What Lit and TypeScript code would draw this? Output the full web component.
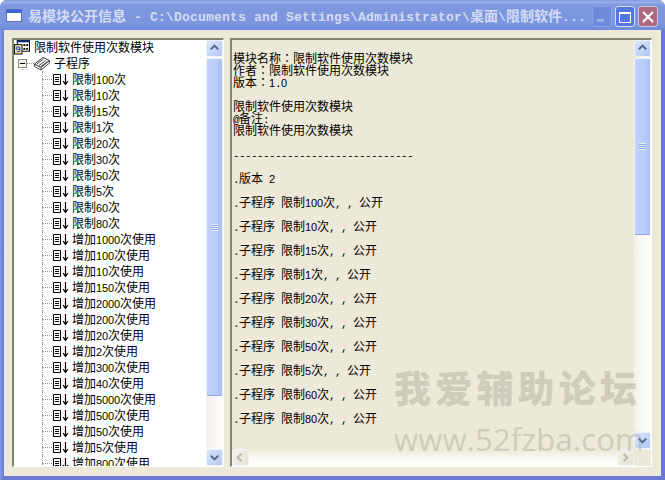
import { LitElement, html, css, svg } from "lit";
import { customElement } from "lit/decorators.js";

const treeItems = ["限制100次","限制10次","限制15次","限制1次","限制20次","限制30次","限制50次","限制5次","限制60次","限制80次","增加1000次使用","增加100次使用","增加10次使用","增加150次使用","增加2000次使用","增加200次使用","增加20次使用","增加2次使用","增加300次使用","增加40次使用","增加5000次使用","增加500次使用","增加50次使用","增加5次使用","增加800次使用"];
const progs = ["限制100次","限制10次","限制15次","限制1次","限制20次","限制30次","限制50次","限制5次","限制60次","限制80次"];

const up = svg`<path d="M4 9 L8 5 L12 9" fill="none" stroke="#4d6185" stroke-width="2"/>`;
const down = svg`<path d="M4 6 L8 10 L12 6" fill="none" stroke="#4d6185" stroke-width="2"/>`;
const left = svg`<path d="M9 4 L5 8 L9 12" fill="none" stroke="#b8b8a8" stroke-width="2"/>`;
const right = svg`<path d="M6 4 L10 8 L6 12" fill="none" stroke="#b8b8a8" stroke-width="2"/>`;

/* Half-width runs get their own font so that each character takes 6px, as in the bitmap font of the original. */
function mix(text: string) {
  return text.split(/([0-9]+|[\x00-\x2f\x3a-\x7f]+|：)/).filter(Boolean).map(run => {
    if (run === "：") return html`<span class="c">：</span>`;
    if (/^[0-9]/.test(run)) return html`<span class="d">${run}</span>`;
    return /^[\x00-\x7f]/.test(run) ? html`<span class="a">${run}</span>` : run;
  });
}

@customElement("app-root")
export class AppRoot extends LitElement {
  static styles = css`
    :host { display: block; width: 665px; height: 480px; overflow: hidden; font-family: "Noto Sans CJK SC", "Liberation Sans", sans-serif; }
    .win { position: relative; width: 665px; height: 480px; box-sizing: border-box; display: flex; flex-direction: column; background: linear-gradient(to right, #7f96e2 0, #6a78d4 4px, #6a78d4 100%); border-radius: 7px 7px 0 0; }
    .title { height: 30px; flex: none; box-sizing: border-box; display: flex; align-items: flex-start; padding: 6px 7px 0 6px; gap: 6px; border-radius: 7px 7px 0 0;
      background: linear-gradient(to bottom, #7f97dd 0, #9ab0ea 2px, #7f99e0 5px, #7b95df 24px, #7089d8 30px); }
    .appicon { flex: none; margin-top: 2px; }
    .ttext { flex: 1; min-width: 0; margin-top: -1px; font-family: "Noto Sans CJK SC", sans-serif; font-size: 14px; line-height: 20px; font-weight: 700; color: #d3dcf4; white-space: pre; overflow: hidden; }
    .ttext .a { font-family: "Liberation Mono", monospace; font-size: 13px; letter-spacing: 0.2px; line-height: 0; }
    .btns { display: flex; gap: 3px; flex: none; }
    .btn { width: 20px; height: 21px; box-sizing: border-box; border: 1px solid #b5c4ee; border-radius: 3px; display: flex; align-items: center; justify-content: center; }
    .min { background: #7189dc; border-color: #8a9fe4; }
    .max { background: #5577e0; border-color: #d5ddf5; }
    .close { background: #ab6a80; border-color: #c9c5e0; }
    .body { flex: 1; min-height: 0; display: flex; margin: 0 4px 4px 4px; background: #ece9d8; padding: 8px 9px 9px 8px; gap: 6px; }
    .panel { position: relative; box-sizing: border-box; height: 100%; border-top: 2px solid #85826f; border-left: 2px solid #85826f; border-right: 1px solid #fff; border-bottom: 1px solid #fff; overflow: hidden; display: flex; }
    .left { width: 212px; background: #fff; flex: none; }
    .right { flex: 1; min-width: 0; background: #ece9d8; }
    .tree { flex: 1; min-width: 0; overflow: hidden; font-size: 12px; color: #000; margin-top: -1px; position: relative; }
    .a { font-family: "Liberation Mono", monospace; font-size: 11px; letter-spacing: -0.6px; line-height: 0; }
    .d { font-family: "Liberation Sans", sans-serif; font-size: 11px; letter-spacing: -0.12px; line-height: 0; }
    .c { font-family: "Noto Sans CJK TC", sans-serif; }
    .row { height: 16px; display: flex; align-items: center; white-space: pre; position: relative; line-height: 16px; }
    .root { gap: 4px; }
    .sub { padding-left: 4px; }
    .subdots { width: 7px; flex: none; border-top: 1px dotted #9c9a8c; }
    .sub svg { margin-right: 4px; }
    .subdown { position: absolute; left: 8px; top: 8px; height: 7px; border-left: 1px dotted #9c9a8c; }
    .leaf { padding-left: 28px; gap: 3px; }
    .leaf .leafline { margin-right: -3px; }
    .leafline { width: 10px; flex: none; height: 16px; position: relative; }
    .leafline::before { content: ""; position: absolute; left: 0; top: 0; bottom: 0; border-left: 1px dotted #9c9a8c; }
    .leafline::after { content: ""; position: absolute; left: 0; right: 0; top: 8px; border-top: 1px dotted #9c9a8c; }
    .expander { width: 9px; height: 9px; box-sizing: border-box; border: 1px solid #8c8c7c; background: #f4f3ec; flex: none; position: relative; }
    .expander::after { content: ""; position: absolute; left: 1px; right: 1px; top: 3px; height: 1px; background: #000; }
    .vbar { width: 17px; flex: none; display: flex; flex-direction: column; gap: 1px; background: #fff; }
    .sbtn { width: 17px; height: 17px; box-sizing: border-box; flex: none; border: 1px solid #eef2fd; border-radius: 2px; background: linear-gradient(135deg, #dbe5fb, #b4c8f6); display: flex; align-items: center; justify-content: center; }
    .track { flex: 1; min-height: 0; display: flex; flex-direction: column; }
    .thumb { box-sizing: border-box; width: 100%; border: 1px solid #eef2fd; border-bottom-color: #8aa6e4; border-radius: 2px; background: linear-gradient(to right, #c3d2fa, #b8ccf8 60%, #aac0f4); display: flex; align-items: center; justify-content: center; flex: none; }
    .grip { width: 7px; height: 7px; background: repeating-linear-gradient(to bottom, #e8eefd 0 1px, #8ea6e8 1px 2px); }
    .rest { flex: 1; background: linear-gradient(to right, #f3f1e8, #fefefd); }
    .rightinner { flex: 1; min-width: 0; display: flex; flex-direction: column; }
    .textarea { flex: 1; min-height: 0; overflow: hidden; padding: 12px 0 0 1px; font-size: 12px; line-height: 12px; color: #000; white-space: pre; }
    .hbar { height: 17px; flex: none; display: flex; justify-content: space-between; background: linear-gradient(to bottom, #ece9d8, #fdfdfa 70%); }
    .hbar .sbtn { background: linear-gradient(135deg, #f3f2ea, #e4e2d5); }
    .corner { height: 16px; flex: none; background: #ece9d8; }
    .rightbar { background: linear-gradient(to right, #ece9d8, #fdfdfb); }
    .wm { position: absolute; pointer-events: none; left: 394px; top: 365px; display: flex; flex-direction: column; align-items: flex-start; gap: 13px; color: #8e8c7e; opacity: 0.3; }
    .wm1 { font-size: 37px; font-weight: 900; letter-spacing: 4.2px; line-height: 44px; white-space: nowrap; }
    .wm2 { font-size: 31px; font-weight: 400; line-height: 34px; letter-spacing: 0.2px; white-space: nowrap; font-family: "Open Sans", sans-serif; }
  `;

  sbtn(g: unknown) { return html`<div class="sbtn"><svg width="15" height="15" viewBox="0 0 16 16">${g}</svg></div>`; }

  leafIcon() {
    return html`<svg width="17" height="13" viewBox="0 0 17 13"><path d="M1.5 1.5H8.5V11.5H1.5Z M3 4.5H7 M3 6.5H7 M3 8.5H7" fill="none" stroke="#000"/><path d="M13.5 1V11 M11 8L13.5 11.5L16 8" fill="none" stroke="#000" stroke-width="1.2"/></svg>`;
  }

  render() {
    const lines = "模块名称：限制软件使用次数模块\n作者：限制软件使用次数模块\n版本：1.0\n\n限制软件使用次数模块\n@备注:\n限制软件使用次数模块\n\n------------------------------\n\n.版本 2\n\n" + progs.map(p => `.子程序 ${p}, , 公开\n\n`).join("");
    return html`<div class="win">
      <div class="title">
        <svg class="appicon" width="16" height="15" viewBox="0 0 16 15"><rect x="0.5" y="1.5" width="15" height="12" fill="#fff" stroke="#4f6fc9"/><rect x="1" y="2" width="14" height="3" fill="#3f66cf"/></svg>
        <div class="ttext">${mix("易模块公开信息 - C:\\Documents and Settings\\Administrator\\桌面\\限制软件...")}</div>
        <div class="btns">
          <div class="btn min"><svg width="12" height="12" viewBox="0 0 12 12"><rect x="1" y="8" width="7" height="3" fill="#9aace8"/></svg></div>
          <div class="btn max"><svg width="14" height="14" viewBox="0 0 14 14"><rect x="1.5" y="2.5" width="11" height="10" fill="none" stroke="#fff"/><rect x="1" y="2" width="12" height="2" fill="#fff"/></svg></div>
          <div class="btn close"><svg width="14" height="14" viewBox="0 0 14 14"><path d="M2 2L12 12M12 2L2 12" stroke="#fff" stroke-width="2.2"/></svg></div>
        </div>
      </div>
      <div class="body">
        <div class="panel left">
          <div class="tree">
            <div class="row root">
              <svg width="16" height="16" viewBox="0 0 17 16"><rect x="3.5" y="0.5" width="13" height="12" fill="#fff" stroke="#000"/><rect x="3" y="0" width="14" height="3" fill="#0a246a"/><rect x="10" y="5" width="2" height="2" fill="#000"/><rect x="13" y="5" width="2" height="2" fill="#000"/><rect x="10" y="9" width="2" height="2" fill="#000"/><rect x="13" y="9" width="2" height="2" fill="#000"/><rect x="0.5" y="5.5" width="8" height="10" fill="#f7e7a0" stroke="#000"/><path d="M6.5 10.5H2.5V8H6V13H3" fill="none" stroke="#1a3cc0"/></svg>
              <span>${mix("限制软件使用次数模块")}</span>
            </div>
            <div class="row sub">
              <span class="subdown"></span>
              <span class="expander"></span>
              <span class="subdots"></span>
              <svg width="16" height="15" viewBox="0 0 16 15"><path d="M0.5 8L9 1.5L15.5 4.5L7 11.5Z" fill="#fff" stroke="#333"/><path d="M0.5 8V10.5L7 14L15.5 7V4.5 M7 11.5V14 M3 8L9.5 3 M5 9.5L11.5 4.5 M7 10.5L13.5 5.5" fill="none" stroke="#444"/></svg>
              <span>${mix("子程序")}</span>
            </div>
            ${treeItems.map(t => html`<div class="row leaf"><span class="leafline"></span>${this.leafIcon()}<span>${mix(t)}</span></div>`)}
          </div>
          <div class="vbar">
            ${this.sbtn(up)}
            <div class="track">
              <div class="thumb" style="height:338px"><div class="grip"></div></div>
              <div class="rest"></div>
            </div>
            ${this.sbtn(down)}
          </div>
        </div>
        <div class="panel right">
          <div class="rightinner">
            <div class="textarea">${mix(lines)}</div>
            <div class="hbar">${this.sbtn(left)}${this.sbtn(right)}</div>
          </div>
          <div class="vbar rightbar">
            ${this.sbtn(up)}
            <div class="track">
              <div class="thumb" style="height:177px"><div class="grip"></div></div>
              <div class="rest"></div>
            </div>
            ${this.sbtn(down)}
            <div class="corner"></div>
          </div>
        </div>
        <div class="wm"><div class="wm1">我爱辅助论坛</div><div class="wm2">www.52fzba.com</div></div>
      </div>
    </div>`;
  }
}
